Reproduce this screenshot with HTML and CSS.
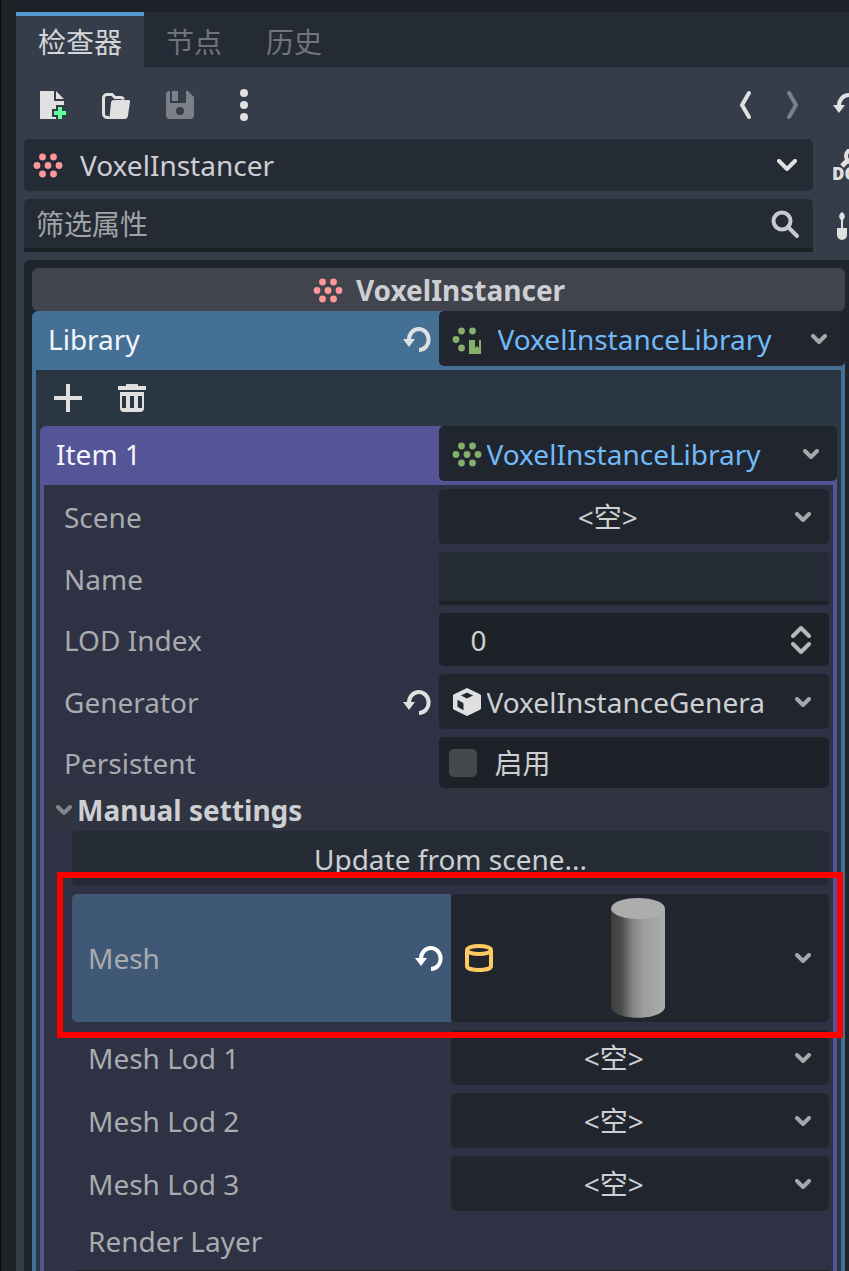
FILE: index.html
```html
<!DOCTYPE html>
<html lang="zh-CN">
<head>
<meta charset="utf-8">
<meta name="viewport" content="width=device-width, initial-scale=1">
<title>检查器</title>
<link rel="stylesheet" href="styles.css">
</head>
<body>
<svg class="symbols" aria-hidden="true">
  <symbol id="reset" viewBox="0 0 28 26"><path d="M6 14.5V13.500A9.800 10.500 0 1 1 16 24" fill="none" stroke="currentColor" stroke-width="4"/><path d="M0 13H12L6 21Z" fill="currentColor"/></symbol>
  <symbol id="chevron" viewBox="0 0 16 10"><path d="M2 2L8 8L14 2" fill="none" stroke="currentColor" stroke-width="4" stroke-linecap="round" stroke-linejoin="round"/></symbol>
  <symbol id="voxels" viewBox="0 0 32 32"><g fill="currentColor"><circle cx="10.500" cy="8" r="3.400"/><circle cx="21.500" cy="8" r="3.400"/><circle cx="5" cy="16.500" r="3.400"/><circle cx="16" cy="16.500" r="3.400"/><circle cx="27" cy="16.500" r="3.400"/><circle cx="10.500" cy="25" r="3.400"/><circle cx="21.500" cy="25" r="3.400"/></g></symbol>
</svg>
<main class="dock">
  <div class="tabs" role="tablist">
    <button class="tab active" role="tab" aria-selected="true">检查器</button>
    <button class="tab" role="tab" aria-selected="false">节点</button>
    <button class="tab" role="tab" aria-selected="false">历史</button>
  </div>

  <div class="top">
    <div class="toolbar">
      <div class="tools">
        <button class="tool" aria-label="New resource"><svg class="icon" viewBox="0 0 32 32"><path fill="#e0e0e0" d="M4 2V30H20V28H16V20H20V16H28V12H18V2ZM20 2V10H28Z"/><path fill="#5fff97" d="M22 18h4v4h4v4h-4v4h-4v-4h-4v-4h4z"/></svg></button>
        <button class="tool" aria-label="Open resource"><svg class="icon" viewBox="0 0 32 32"><path fill="none" stroke="#e0e0e0" stroke-width="3" d="M9 28.500H7.500A4 4 0 0 1 3.500 24.500V9A3.500 3.500 0 0 1 7 5.500H12L15 8.500H20.500A3 3 0 0 1 23.500 10.500"/><path fill="#e0e0e0" d="M14 11H28.500A1.500 1.500 0 0 1 30 12.800L28 26.500A4 4 0 0 1 24 30H7.500A2.500 2.500 0 0 0 9.500 28L11 14A3 3 0 0 1 14 11Z"/></svg></button>
        <button class="tool" aria-label="Save resource"><svg class="icon" viewBox="0 0 32 32"><path fill="#7c8088" fill-rule="evenodd" d="M6 2V14H22V2H24L30 8V26A4 4 0 0 1 26 30H6A4 4 0 0 1 2 26V6A4 4 0 0 1 6 2ZM16 18A4 4 0 1 0 16 26A4 4 0 1 0 16 18ZM8 2H14V12H8Z"/></svg></button>
        <button class="tool" aria-label="More options"><svg class="icon" viewBox="0 0 32 32"><g fill="#e0e0e0"><circle cx="16" cy="4" r="4"/><circle cx="16" cy="16" r="4"/><circle cx="16" cy="28" r="4"/></g></svg></button>
      </div>
      <div class="nav">
        <button class="tool" aria-label="Back"><svg class="icon" viewBox="0 0 32 32"><path d="M20 4L13 16L20 28" fill="none" stroke="#e0e0e0" stroke-width="4" stroke-linecap="round" stroke-linejoin="round"/></svg></button>
        <button class="tool" aria-label="Forward"><svg class="icon" viewBox="0 0 32 32"><path d="M12 4L19 16L12 28" fill="none" stroke="#7c8088" stroke-width="4" stroke-linecap="round" stroke-linejoin="round"/></svg></button>
      </div>
    </div>
    <button class="side" aria-label="History"><svg class="reset"><use href="#reset"/></svg></button>

    <div class="picker object">
      <select aria-label="Object"><option>VoxelInstancer</option></select>
      <svg class="icon red lead"><use href="#voxels"/></svg>
      <svg class="big-chevron" viewBox="0 0 20 13"><path d="M2 2L10 10L18 2" fill="none" stroke="currentColor" stroke-width="4" stroke-linecap="round" stroke-linejoin="round"/></svg>
    </div>
    <button class="side" aria-label="Documentation"><svg class="icon" viewBox="0 0 32 32"><circle cx="20" cy="7" r="7" fill="none" stroke="#e0e0e0" stroke-width="4"/><path d="M15 11L9 17" stroke="#e0e0e0" stroke-width="5"/><text class="doc" x="-1" y="31">DOC</text></svg></button>

    <div class="filter">
      <input type="text" placeholder="筛选属性" aria-label="筛选属性">
      <svg class="icon" viewBox="0 0 32 32"><circle cx="13" cy="13" r="8.500" fill="none" stroke="#c9cacd" stroke-width="4"/><path d="M19 19L28 28" stroke="#c9cacd" stroke-width="4" stroke-linecap="round"/></svg>
    </div>
    <button class="side" aria-label="Tools"><svg class="icon" viewBox="0 0 32 32"><path fill="#e0e0e0" d="M9 2C6 4 5 7 8 10V18H4V25A5 5 0 0 0 14 25V18H10V10C13 7 12 4 9 2Z"/></svg></button>
  </div>

  <section class="inspector">
    <h1 class="category"><svg class="icon red"><use href="#voxels"/></svg>VoxelInstancer</h1>

    <div class="section library">
      <div class="row">
        <div class="name"><label for="library">Library</label><button class="revert" aria-label="Reset Library"><svg class="reset"><use href="#reset"/></svg></button></div>
        <div class="picker resource blue wide">
          <select id="library"><option>VoxelInstanceLibrary</option></select>
          <svg class="icon lead green" viewBox="0 0 32 32"><g fill="currentColor"><circle cx="10.500" cy="8" r="3.400"/><circle cx="21.500" cy="8" r="3.400"/><circle cx="5" cy="16.500" r="3.400"/><circle cx="10.500" cy="25" r="3.400"/><path d="M18 17H24V25L26 23L28 25V17H30V31H18Z"/></g></svg>
          <svg class="chevron"><use href="#chevron"/></svg>
        </div>
      </div>
      <div class="section-body">
        <div class="item-tools">
          <button class="tool" aria-label="Add item"><svg class="icon" viewBox="0 0 32 32"><path d="M16 2V30M2 16H30" stroke="#e0e0e0" stroke-width="4"/></svg></button>
          <button class="tool" aria-label="Remove item"><svg class="icon" viewBox="0 0 32 32"><path fill="#e0e0e0" fill-rule="evenodd" d="M10 2H22V4H30V8H2V4H10ZM4 10H28V26A4 4 0 0 1 24 30H8A4 4 0 0 1 4 26ZM6 14V26H10V14ZM14 14V26H18V14ZM22 14V26H26V14Z"/></svg></button>
        </div>
        <div class="section item">
          <div class="row">
            <div class="name"><label for="item">Item 1</label></div>
            <div class="picker resource blue">
              <select id="item"><option>VoxelInstanceLibrary</option></select>
              <svg class="icon lead green"><use href="#voxels"/></svg>
              <svg class="chevron"><use href="#chevron"/></svg>
            </div>
          </div>
          <div class="section-body properties">
            <div class="row">
              <div class="name"><label for="scene">Scene</label></div>
              <div class="picker empty"><select id="scene"><option>&lt;空&gt;</option></select><svg class="chevron"><use href="#chevron"/></svg></div>
            </div>
            <div class="row">
              <div class="name"><label for="name">Name</label></div>
              <input class="line-edit" id="name" type="text">
            </div>
            <div class="row">
              <div class="name"><label for="lod">LOD Index</label></div>
              <div class="spin"><input id="lod" type="number" value="0"><svg viewBox="0 0 20 28"><path d="M2 10L10 2L18 10M2 18L10 26L18 18" fill="none" stroke="#b7b8bb" stroke-width="4" stroke-linecap="round" stroke-linejoin="round"/></svg></div>
            </div>
            <div class="row">
              <div class="name"><label for="generator">Generator</label><button class="revert" aria-label="Reset Generator"><svg class="reset"><use href="#reset"/></svg></button></div>
              <div class="picker resource">
                <select id="generator"><option>VoxelInstanceGenera</option></select>
                <svg class="icon lead" viewBox="0 0 32 32"><path fill="#e0e0e0" fill-rule="evenodd" stroke="#e0e0e0" stroke-linejoin="round" d="M16 2.500L29.500 9V23L16 29.500L2.500 23V9ZM16 6L9 9.500L16 13L23 9.500ZM6 13V21L13 25V17Z"/></svg>
                <svg class="chevron"><use href="#chevron"/></svg>
              </div>
            </div>
            <div class="row">
              <div class="name"><label for="persistent">Persistent</label></div>
              <label class="check"><input id="persistent" type="checkbox">启用</label>
            </div>

            <button class="group" aria-expanded="true"><svg class="chevron"><use href="#chevron"/></svg>Manual settings</button>
            <div class="group-body">
              <button class="action">Update from scene...</button>
              <div class="row mesh">
                <div class="name"><label for="mesh">Mesh</label><button class="revert" aria-label="Reset Mesh"><svg class="reset"><use href="#reset"/></svg></button></div>
                <button class="preview" id="mesh" aria-haspopup="menu">
                  <svg class="icon" viewBox="0 0 32 32"><g fill="none" stroke="#ffca5f" stroke-width="4"><ellipse cx="16" cy="8" rx="12" ry="4"/><path d="M4 8V24C4 29.300 28 29.300 28 24V8"/></g></svg>
                  <svg class="cylinder" viewBox="0 0 54 120">
                    <defs><linearGradient id="shade"><stop offset="0" stop-color="#3d3d3d"/><stop offset="0.200" stop-color="#4e4e4e"/><stop offset="0.280" stop-color="#626262"/><stop offset="0.400" stop-color="#858585"/><stop offset="0.600" stop-color="#9d9d9d"/><stop offset="1" stop-color="#adadad"/></linearGradient></defs>
                    <path fill="url(#shade)" d="M0 11V110C5 123 49 123 54 110V11Z"/><ellipse cx="27" cy="10.500" rx="27" ry="10.500" fill="#adadad"/>
                  </svg>
                  <svg class="chevron"><use href="#chevron"/></svg>
                </button>
              </div>
              <div class="row">
                <div class="name"><label for="lod1">Mesh Lod 1</label></div>
                <div class="picker empty"><select id="lod1"><option>&lt;空&gt;</option></select><svg class="chevron"><use href="#chevron"/></svg></div>
              </div>
              <div class="row">
                <div class="name"><label for="lod2">Mesh Lod 2</label></div>
                <div class="picker empty"><select id="lod2"><option>&lt;空&gt;</option></select><svg class="chevron"><use href="#chevron"/></svg></div>
              </div>
              <div class="row">
                <div class="name"><label for="lod3">Mesh Lod 3</label></div>
                <div class="picker empty"><select id="lod3"><option>&lt;空&gt;</option></select><svg class="chevron"><use href="#chevron"/></svg></div>
              </div>
              <div class="name layer">Render Layer</div>
              <div class="layers"></div>
            </div>
          </div>
        </div>
      </div>
    </div>
  </section>
</main>
</body>
</html>
```
FILE: styles.css
```css
* {
  box-sizing: border-box;
}

body {
  margin: 0;
  height: 100vh;
  overflow: hidden;
  padding: 12px 0 0 15px;
  border-left: 1px solid #08090c;
  background: #1e2228;
  color: #cdcfd2;
  font: 28px/38px "Noto Sans", "Noto Sans CJK SC", sans-serif;
}

button,
input,
select {
  margin: 0;
  padding: 0;
  border: 0;
  background: none;
  color: inherit;
  font: inherit;
}

select,
input {
  appearance: none;
  width: 100%;
  min-width: 0;
}

svg {
  display: block;
  flex: none;
}

.symbols {
  position: absolute;
  width: 0;
  height: 0;
}

.icon {
  width: 32px;
  height: 32px;
}

.reset {
  width: 28px;
  height: 26px;
  color: #e0e0e0;
}

.chevron {
  width: 16px;
  height: 10px;
  color: #a6a7aa;
}

.red {
  color: #ff9999;
}

.green {
  color: #84b06c;
}

.dock {
  display: flex;
  flex-direction: column;
  height: 100%;
  background: #363d4a;
}

.tabs {
  display: flex;
  flex: none;
  height: 55px;
  background: #252b34;
}

.tab {
  padding: 0 22px;
  border-top: 4px solid transparent;
  color: #71757b;
}

.tab.active {
  border-top-color: #5699ce;
  background: #363d4a;
  color: #d4d6d9;
}

.top {
  display: grid;
  flex: none;
  grid-template-columns: minmax(0, 1fr) 28px;
  gap: 8px;
  padding: 12px 0 8px 8px;
}

.toolbar,
.tools,
.nav,
.item-tools {
  display: flex;
  align-items: center;
}

.toolbar {
  height: 52px;
  justify-content: space-between;
  padding-left: 4px;
}

.tools,
.item-tools {
  gap: 16px;
}

.nav {
  gap: 8px;
}

.tool {
  display: flex;
  width: 48px;
  height: 52px;
  align-items: center;
  justify-content: center;
}

.nav .tool {
  width: 40px;
}

.side {
  display: flex;
  align-items: center;
  overflow: hidden;
  padding-left: 12px;
}

.doc {
  fill: #e0e0e0;
  font: 800 17px/17px "Open Sans", sans-serif;
}

.picker {
  display: grid;
  grid-template-columns: 48px minmax(0, 1fr) 52px;
  align-items: center;
  height: 55px;
  border-radius: 5px;
  background: #21252d;
}

.picker select {
  grid-area: 1 / 1 / 2 / -1;
  height: 100%;
  border-radius: 5px;
}

.picker svg {
  grid-row: 1;
  pointer-events: none;
}

.picker .chevron,
.picker .big-chevron {
  grid-column: 3;
  justify-self: center;
}

.picker .lead {
  grid-column: 1;
  margin-left: 12px;
}

.object {
  height: 52px;
  background: #252b34;
}

.object .lead {
  margin-left: 8px;
}

.object select {
  padding-left: 56px;
}

.big-chevron {
  width: 20px;
  height: 13px;
  color: #e0e0e0;
}

.resource select {
  padding: 0 52px 0 48px;
}

.resource.wide select {
  padding-left: 59px;
}

.empty select {
  padding-right: 52px;
  text-align: center;
}

.blue select {
  color: #70bafa;
}

.filter {
  display: flex;
  height: 53px;
  align-items: center;
  padding: 0 12px;
  border-bottom: 4px solid #1c2127;
  border-radius: 5px 5px 0 0;
  background: #252b34;
}

.filter input::placeholder {
  color: #a0a3a7;
  opacity: 1;
}

.inspector {
  flex: 1;
  min-height: 0;
  margin-left: 8px;
  padding: 8px 4px 0 8px;
  overflow: hidden;
  border-radius: 6px 0 0;
  background: #20242c;
}

.category {
  display: flex;
  height: 43px;
  align-items: center;
  justify-content: center;
  gap: 12px;
  margin: 0;
  border-radius: 6px;
  background: #41444d;
  font-size: 28px;
}

.section {
  border-radius: 6px 6px 0 0;
}

.section-body {
  margin: 4px 4px 0;
}

.row {
  display: grid;
  grid-template-columns: minmax(0, 1fr) minmax(0, 1fr);
}

.name {
  display: flex;
  align-items: center;
  justify-content: space-between;
  padding: 0 8px 0 16px;
  color: #a9abae;
}

.library {
  background: #447096;
}

.library > .row > .name,
.item > .row > .name {
  color: #f4f6fa;
}

.library > .section-body {
  padding: 0 4px;
  background: #2b3643;
}

.item-tools {
  height: 56px;
  padding-left: 4px;
}

.item {
  background: #545496;
}

.properties {
  display: flex;
  flex-direction: column;
  gap: 8px;
  padding: 4px 4px 0;
  background: #2e3244;
}

.line-edit {
  height: 53px;
  padding: 0 12px;
  border-bottom: 4px solid #1e2228;
  border-radius: 5px 5px 0 0;
  background: #252b34;
}

.spin {
  display: flex;
  height: 53px;
  align-items: center;
  padding: 0 18px 0 32px;
  border-radius: 5px;
  background: #1e2228;
}

.spin input::-webkit-inner-spin-button {
  appearance: none;
}

.spin svg {
  width: 20px;
  height: 28px;
}

.check {
  display: flex;
  height: 51px;
  align-items: center;
  gap: 18px;
  padding-left: 10px;
  border-radius: 5px;
  background: #1e2228;
}

.check input {
  width: 28px;
  height: 28px;
  border-radius: 5px;
  background: #45484c;
}

.group {
  display: flex;
  height: 43px;
  align-items: center;
  gap: 5px;
  margin-top: -8px;
  padding-left: 8px;
  background: #303441;
  font-weight: 700;
}

.group .chevron {
  color: #828488;
}

.group-body {
  display: flex;
  flex-direction: column;
  gap: 8px;
  margin-top: -8px;
  padding-left: 24px;
}

.action {
  height: 55px;
  border-radius: 5px;
  background: #252b34;
}

.mesh {
  position: relative;
  height: 128px;
}

.mesh::after {
  position: absolute;
  inset: -22px -14px -16px -15px;
  border: 6px solid #ff0000;
  content: "";
  pointer-events: none;
}

.mesh .name {
  border-radius: 5px 0 0 5px;
  background: #3f5876;
}

.mesh .reset {
  color: #ffffff;
}

.preview {
  display: grid;
  grid-template-columns: 48px minmax(0, 1fr) 52px;
  align-items: center;
  justify-items: center;
  border-radius: 5px;
  background: #21252d;
}

.preview .icon {
  margin-left: 8px;
}

.cylinder {
  width: 54px;
  height: 120px;
}

.layer {
  height: 43px;
}

.layers {
  height: 80px;
  margin-left: 4px;
  background: #1c2127;
}
```
